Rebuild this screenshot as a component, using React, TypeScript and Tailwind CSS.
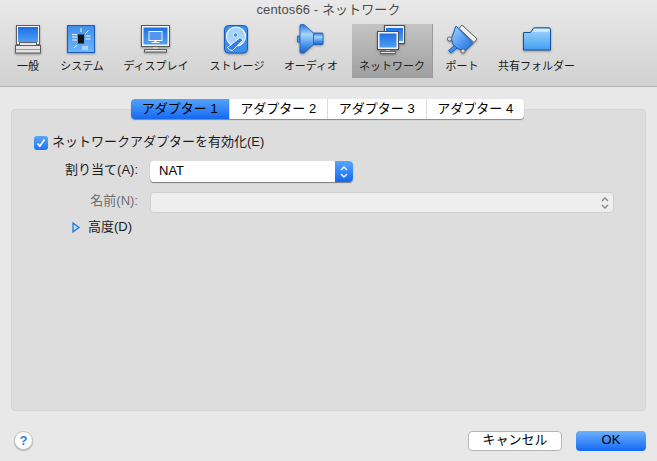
const font = "font-['Liberation_Sans','Noto_Sans_CJK_JP',sans-serif]";
const iconShadow = "drop-shadow-[0_1px_1px_rgba(0,0,0,0.35)]";

const Defs = () => (
  <svg width="0" height="0" className="absolute">
    <defs>
      <linearGradient id="screen" x1="0" y1="0" x2="0" y2="1">
        <stop offset="0" stopColor="#1f6fe6" />
        <stop offset="1" stopColor="#4f9ff5" />
      </linearGradient>
      <linearGradient id="chip" x1="0" y1="0" x2="0" y2="1">
        <stop offset="0" stopColor="#3f8eee" />
        <stop offset="1" stopColor="#6db4fa" />
      </linearGradient>
      <linearGradient id="cone" x1="0" y1="0" x2="0" y2="1">
        <stop offset="0" stopColor="#2d74d8" />
        <stop offset="0.35" stopColor="#a8d6fb" />
        <stop offset="0.7" stopColor="#4a97ee" />
        <stop offset="1" stopColor="#1f5fc0" />
      </linearGradient>
      <linearGradient id="hood" x1="0" y1="0" x2="1" y2="1">
        <stop offset="0" stopColor="#a8d4fa" />
        <stop offset="0.55" stopColor="#4f9cf0" />
        <stop offset="1" stopColor="#1f6bd0" />
      </linearGradient>
      <linearGradient id="folder" x1="0" y1="0" x2="0" y2="1">
        <stop offset="0" stopColor="#a5d8fb" />
        <stop offset="1" stopColor="#3f9ff2" />
      </linearGradient>
    </defs>
  </svg>
);

const Computer = () => (
  <svg width="26" height="29" viewBox="0 0 26 29" className={iconShadow}>
    <rect x="1.5" y="0.5" width="23" height="19" fill="#f4f4f4" stroke="#5f5f5f" />
    <rect x="3" y="2" width="20" height="15" fill="url(#screen)" />
    <rect x="4.5" y="17.5" width="17" height="3" fill="#e6e6e6" stroke="#5f5f5f" />
    <rect x="0.5" y="20.5" width="25" height="7.5" fill="#e4e4e4" stroke="#5f5f5f" />
    <rect x="1" y="24" width="24" height="1" fill="#9a9a9a" />
  </svg>
);

const Chip = () => (
  <svg width="28" height="28" viewBox="0 0 28 28" className={iconShadow}>
    <rect x="0.5" y="0.5" width="27" height="27" fill="url(#chip)" stroke="#1c5cb8" />
    <rect x="11" y="9.5" width="6" height="9" fill="#141414" />
    <path
      d="M14 3v4M5 9.5h5M5 12h5M5 15h5M18.5 11h5M18.5 14h5M7 23l3-3M18.5 8.5l3-3M16 21v4M18 21v4M20 21v4"
      stroke="#f2f8ff"
      strokeWidth="1"
      fill="none"
    />
  </svg>
);

const Display = () => (
  <svg width="29" height="28" viewBox="0 0 29 28" className={iconShadow}>
    <rect x="0.5" y="0.5" width="28" height="21" fill="#f4f4f4" stroke="#5a5a5a" />
    <rect x="2.5" y="2.5" width="24" height="17" fill="url(#screen)" />
    <rect x="8" y="6.5" width="13" height="9" fill="none" stroke="#f2f8ff" strokeWidth="1" />
    <rect x="9" y="7" width="11" height="8" fill="#4f97ef" />
    <rect x="13.5" y="15.5" width="2" height="2" fill="#f2f8ff" />
    <rect x="10.5" y="17" width="8" height="1" fill="#f2f8ff" />
    <rect x="12" y="22" width="5" height="2.5" fill="#cfcfcf" />
    <rect x="3.5" y="24.5" width="22" height="2.5" fill="#e6e6e6" stroke="#5a5a5a" />
  </svg>
);

const Disk = () => (
  <svg width="24" height="29" viewBox="0 0 24 29" className={iconShadow}>
    <rect x="0.5" y="0.5" width="23" height="27.5" rx="4" fill="#3d8fee" stroke="#1c5cb8" />
    <circle cx="12" cy="11.5" r="9.5" fill="#a5d3fb" stroke="#f2f8ff" strokeWidth="1.2" />
    <circle cx="11.5" cy="10" r="2.2" fill="#3f8eee" stroke="#f2f8ff" strokeWidth="0.8" />
    <path d="M3.5 22.5 L16 12.5 L19 15 L8.5 25.5 Q5 25.5 3.5 22.5 Z" fill="#2f80e8" stroke="#f2f8ff" strokeWidth="1" />
  </svg>
);

const Speaker = () => (
  <svg width="27" height="30" viewBox="0 0 27 30" className={iconShadow}>
    <path d="M0.5 12h2.5v6H0.5z" fill="#4a97ee" stroke="#1c5cb8" strokeWidth="0.7" />
    <rect x="15" y="9" width="11" height="11.5" rx="1" fill="url(#cone)" stroke="#1c5cb8" strokeWidth="0.8" />
    <path d="M3 1.5 Q3 0.5 4.5 0.5 H7 L16.5 9 V20.5 L7 29 H4.5 Q3 29 3 28 Z" fill="url(#cone)" stroke="#1c5cb8" strokeWidth="0.8" />
  </svg>
);

const Network = () => (
  <svg width="29" height="29" viewBox="0 0 29 29" className={iconShadow}>
    <rect x="7.5" y="0.5" width="20" height="18" fill="#efefef" stroke="#4f4f4f" />
    <rect x="9" y="3" width="17" height="13" fill="url(#screen)" />
    <rect x="0.5" y="6.5" width="21" height="18" fill="#f4f4f4" stroke="#4f4f4f" />
    <rect x="2.5" y="8.5" width="17" height="14" fill="url(#screen)" />
    <rect x="9" y="25" width="4" height="1.5" fill="#bbb" />
    <rect x="3.5" y="26.5" width="15" height="2" fill="#e6e6e6" stroke="#4f4f4f" strokeWidth="0.8" />
  </svg>
);

const Port = () => (
  <svg width="32" height="30" viewBox="0 0 32 30" className={iconShadow}>
    <path d="M16 1 L31 15 L28 18.5 L13 4.5 Z" fill="#f0f0f0" stroke="#555" strokeWidth="0.9" />
    <path d="M10 2 L27 19.5 L19.5 26.5 Q13 26 9 23 Q5.5 19 5.5 14.5 Z" fill="url(#hood)" stroke="#1c5cb8" strokeWidth="1" />
    <path d="M8.5 21.5 L2.5 26.5 L5 29 L11 24 Z" fill="#3f8eee" stroke="#1c5cb8" strokeWidth="0.9" />
    <circle cx="3.5" cy="15" r="2.1" fill="#dcdcdc" stroke="#555" strokeWidth="0.8" />
    <circle cx="17" cy="27" r="2.1" fill="#dcdcdc" stroke="#555" strokeWidth="0.8" />
  </svg>
);

const Folder = () => (
  <svg width="28" height="24" viewBox="0 0 28 24" className={iconShadow}>
    <path d="M0.5 23V5.5H7.5L10 1.8Q10.5 0.8 11.5 0.8H26Q27.5 0.8 27.5 2.3V23Z" fill="url(#folder)" stroke="#164f9c" strokeWidth="1" />
    <path d="M9.5 4.8 L11.5 2 H26.5 V4.8 Z" fill="#d4ecfc" />
  </svg>
);

const tools = [
  { label: "一般", icon: <Computer />, width: "w-[56px]", iconPos: "mr-[1px]" },
  { label: "システム", icon: <Chip />, width: "w-[52px]", iconPos: "mr-[2px]" },
  { label: "ディスプレイ", icon: <Display />, width: "w-[96px]", iconPos: "mr-[2px]" },
  { label: "ストレージ", icon: <Disk />, width: "w-[66px]", iconPos: "mr-[3px]" },
  { label: "オーディオ", icon: <Speaker />, width: "w-[82px]", iconPos: "mr-[2px]" },
  { label: "ネットワーク", icon: <Network />, width: "w-[81px]", iconPos: "mr-[2px]", active: true },
  { label: "ポート", icon: <Port />, width: "w-[58px]", iconPos: "" },
  { label: "共有フォルダー", icon: <Folder />, width: "w-[91px]", iconPos: "" },
];

const tabs = ["アダプター 1", "アダプター 2", "アダプター 3", "アダプター 4"];

const Chevrons = ({ color }: { color: string }) => (
  <svg width="8" height="14" viewBox="0 0 8 14" fill="none" stroke={color} strokeWidth="1.4">
    <path d="M1 5l3-3 3 3M1 9l3 3 3-3" />
  </svg>
);

export default function App() {
  return (
    <div className={`w-[657px] h-[461px] overflow-hidden bg-[#e8e8e8] flex flex-col ${font}`}>
      <Defs />
      {/* Toolbar */}
      <div className="h-[87px] shrink-0 border-b border-[#b4b4b4] bg-gradient-to-b from-[#e9e9e9] to-[#d1d1d1] rounded-t-[5px] flex flex-col">
        <div className="h-[19px] pt-[1px] text-center text-[13px] leading-[18px] tracking-[0.1px] text-[#4c4c4c]">centos66 - ネットワーク</div>
        <div className="flex h-[54px] mt-[5px]">
          {tools.map((t) => (
            <div
              key={t.label}
              className={`${t.width} shrink-0 h-[54px] flex flex-col items-center justify-between ${t.active ? "bg-gradient-to-b from-[#c4c4c4] to-[#9f9f9f] border-r border-[#9a9a9a]" : ""}`}
            >
              <div className={`h-[30px] flex items-center justify-center ${t.iconPos}`}>{t.icon}</div>
              <div className="text-[11px] leading-[14px] mb-[5px] whitespace-nowrap text-[#1a1a1a]">{t.label}</div>
            </div>
          ))}
        </div>
      </div>

      {/* Panel */}
      <div className="relative shrink-0 mx-[11px] mt-[22px] h-[302px] rounded-[4px] bg-[#dddddd] border border-[#d6d6d6]">
        <div className="absolute left-[119px] top-[-11px] w-[393px] h-[20px] flex rounded-[4px] bg-white shadow-[0_1px_1px_rgba(0,0,0,0.4)] text-[13px] leading-[20px] text-black">
          {tabs.map((t, i) => (
            <div
              key={t}
              className={`flex-1 text-center ${i === 0 ? "rounded-l-[4px] bg-gradient-to-b from-[#55a2fb] to-[#1169f1]" : "border-l border-[#dcdcdc]"}`}
            >
              {t}
            </div>
          ))}
        </div>

        <div className="pt-[25px] pl-[22px] text-[13px] text-[#1c1c1c]">
          <div className="flex items-center h-[16px] gap-[4px]">
            <div className="w-[14px] h-[14px] rounded-[3px] bg-gradient-to-b from-[#5aa6fb] to-[#1f74f0] flex items-center justify-center">
              <svg width="10" height="10" viewBox="0 0 10 10" fill="none" stroke="#fff" strokeWidth="1.6">
                <path d="M1.5 5.5l2.3 2.6L8.5 1.5" />
              </svg>
            </div>
            <span className="pb-[3px]">ネットワークアダプターを有効化(E)</span>
          </div>

          <div className="flex items-center mt-[10px] h-[21px]">
            <div className="w-[104px] pb-[3px] text-right whitespace-nowrap">割り当て(A):</div>
            <div className="ml-[12px] w-[203px] h-[21px] rounded-[4px] bg-white shadow-[0_1px_1px_rgba(0,0,0,0.45)] flex justify-between">
              <span className="pl-[9px] leading-[19px] text-black">NAT</span>
              <div className="w-[18px] rounded-r-[4px] bg-gradient-to-b from-[#59a5fb] to-[#0f68f2] flex items-center justify-center">
                <Chevrons color="#fff" />
              </div>
            </div>
          </div>

          <div className="flex items-center mt-[10px] h-[21px]">
            <div className="w-[104px] pb-[3px] text-right text-[#6d6d6d]">名前(N):</div>
            <div className="ml-[12px] w-[464px] h-[21px] rounded-[4px] bg-[#eeeeee] border border-[#cfcfcf] flex items-center justify-end pr-[4px]">
              <Chevrons color="#8a8a8a" />
            </div>
          </div>

          <div className="flex items-center mt-[6px] h-[16px] pl-[38px] gap-[8px]">
            <svg width="8" height="11" viewBox="0 0 8 11">
              <path d="M1 1l6 4.5L1 10z" fill="#b9dafc" stroke="#1a73e0" strokeWidth="1.2" />
            </svg>
            <span>高度(D)</span>
          </div>
        </div>
      </div>

      {/* Footer */}
      <div className="flex items-start justify-between pl-[14px] pr-[11px] mt-[20px] text-[13px]">
        <div className="w-[19px] h-[19px] rounded-full bg-white border border-[#c4c4c4] shadow-[0_1px_1px_rgba(0,0,0,0.25)] flex items-center justify-center text-[13px] font-bold text-[#2a7cf0] leading-none">?</div>
        <div className="flex gap-[14px] text-black">
          <div className="w-[94px] h-[20px] rounded-[4px] bg-white border border-[#b5b5b5] leading-[15px] text-center">キャンセル</div>
          <div className="w-[70px] h-[20px] rounded-[4px] bg-gradient-to-b from-[#6cb0fb] to-[#0f68f5] leading-[18px] text-center">OK</div>
        </div>
      </div>
    </div>
  );
}
